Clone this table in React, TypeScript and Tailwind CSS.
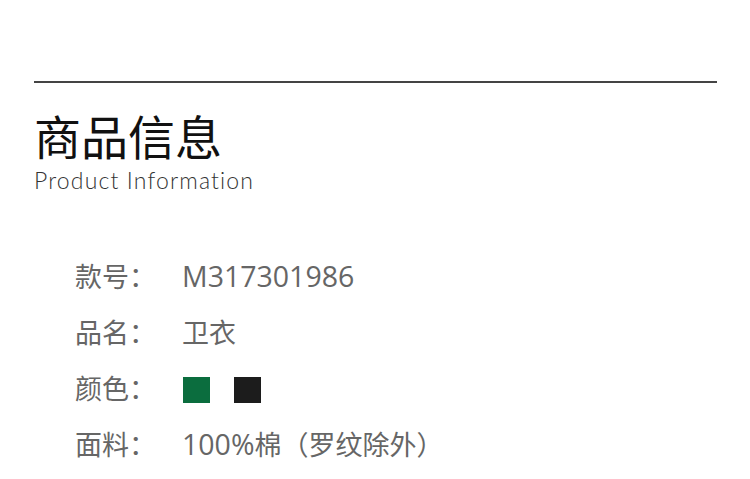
import React from "react";

const cjk = "font-['Open_Sans','Noto_Sans_CJK_SC',sans-serif]";

function Row({ label, children }: { label: string; children: React.ReactNode }) {
  return (
    <div className="flex h-[56px] items-center">
      <div className={`w-[107px] text-[27px] leading-none text-[#666] ${cjk}`}>{label}</div>
      <div className={`flex items-center text-[27px] leading-none text-[#666] ${cjk}`}>{children}</div>
    </div>
  );
}

export default function App() {
  return (
    <div className="w-[750px] h-[479px] bg-white overflow-hidden">
      <div className="pl-[34px] pr-[33px] pt-[81px]">
        <div className="h-[2px] bg-[#444]" />
        <div className="mt-[29px] text-[47px] leading-[46px] text-[#111] font-['Noto_Sans_CJK_SC',sans-serif]">
          商品信息
        </div>
        <div className="mt-[9px] text-[23px] leading-[26px] font-light tracking-[1.15px] text-[#333] font-['Lato',sans-serif]">
          Product Information
        </div>
      </div>
      <div className="pl-[75px] mt-[55px]">
        <Row label="款号：">
          <span className="text-[28.5px]">M317301986</span>
        </Row>
        <Row label="品名：">卫衣</Row>
        <Row label="颜色：">
          <span className="ml-[1px] mt-[4px] block w-[27px] h-[26px] bg-[#0b6d3e]" />
          <span className="ml-[24px] mt-[4px] block w-[27px] h-[26px] bg-[#1c1c1c]" />
        </Row>
        <Row label="面料：">
          <span className="text-[28.5px]">100%</span>棉（罗纹除外）
        </Row>
      </div>
    </div>
  );
}
